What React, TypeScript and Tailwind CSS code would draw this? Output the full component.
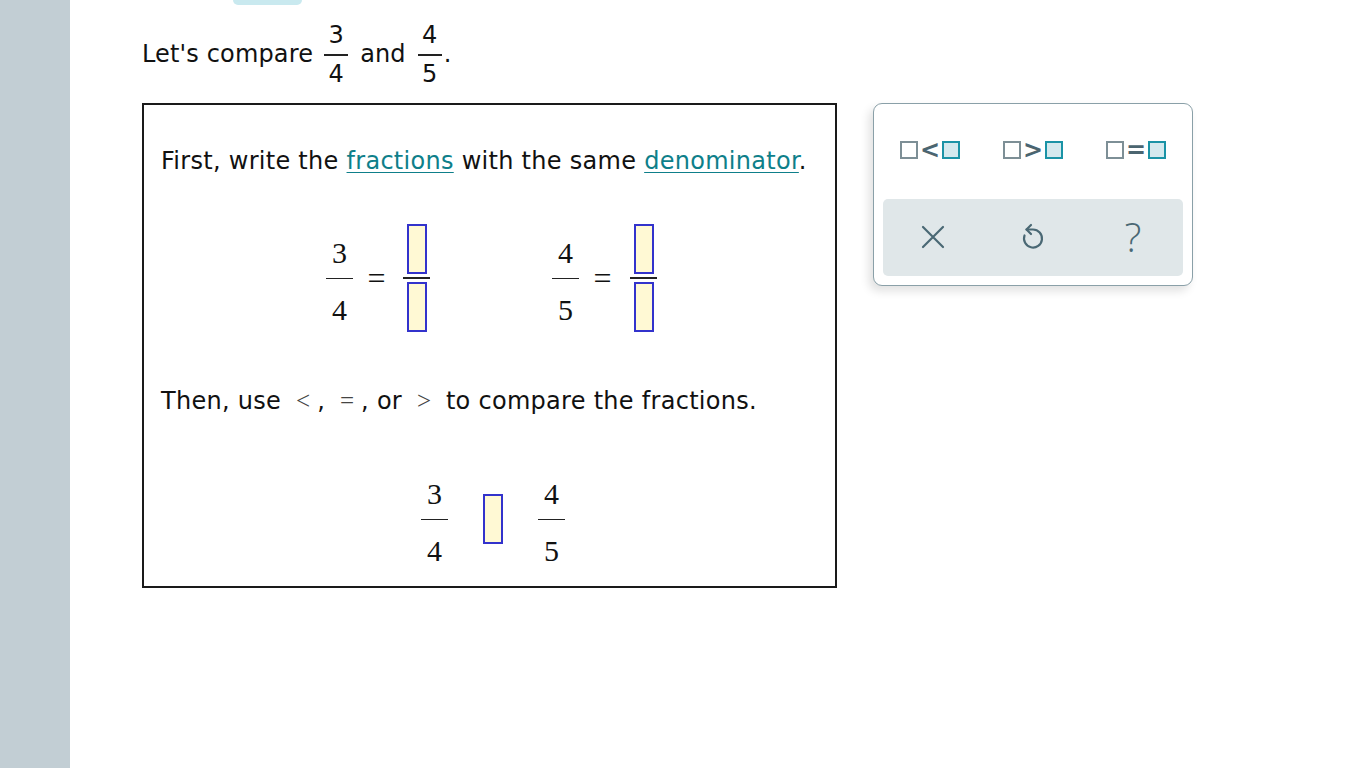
import React from "react";

const sans = { fontFamily: '"DejaVu Sans", Verdana, sans-serif' };
const serif = { fontFamily: '"Liberation Serif", "Times New Roman", serif' };

function Frac({ num, den }: { num: string; den: string }) {
	return (
		<span className="inline-flex w-[24px] flex-col items-center text-[24px]">
			<span className="h-[24px] leading-[24px]">{num}</span>
			<span className="mb-[6px] mt-[7px] h-[1.5px] w-full bg-[#222]" />
			<span className="h-[24px] leading-[24px]">{den}</span>
		</span>
	);
}

function AnswerBox() {
	return <span className="block h-[50px] w-[20px] border-2 border-[#3333cc] bg-[#fff9d4]" />;
}

function BoxFrac() {
	return (
		<span className="flex w-[27px] flex-col items-center">
			<AnswerBox />
			<span className="my-[3px] h-[2px] w-full bg-[#222]" />
			<AnswerBox />
		</span>
	);
}

function SerifFrac({ num, den, className = "" }: { num: string; den: string; className?: string }) {
	return (
		<span className={`flex w-[27px] flex-col items-center text-[30px] text-[#111] ${className}`} style={serif}>
			<span className="h-[30px] leading-[30px]">{num}</span>
			<span className="mb-[16px] mt-[10px] h-[1.5px] w-full bg-[#222]" />
			<span className="h-[30px] leading-[30px]">{den}</span>
		</span>
	);
}

function Eq() {
	return (
		<span className="flex h-[30px] w-[19px] items-center justify-center text-[32px] leading-[30px] text-[#111]" style={serif}>
			=
		</span>
	);
}

function Sym({ children }: { children: React.ReactNode }) {
	return (
		<span className="mx-[7px] text-[25px] tracking-normal text-[#444]" style={serif}>
			{children}
		</span>
	);
}

function Sq({ filled }: { filled?: boolean }) {
	return filled ? (
		<span className="inline-block h-[18px] w-[18px] border-2 border-[#1a93a6] bg-[#d3e9ee]" />
	) : (
		<span className="inline-block h-[18px] w-[18px] border-2 border-[#7d8f96] bg-white" />
	);
}

function RelButton({ sym }: { sym: string }) {
	return (
		<button className="flex h-[40px] w-[90px] items-center justify-center gap-[2px]">
			<Sq />
			<span className="text-[24px] font-semibold leading-none text-[#4b6570]" style={sans}>
				{sym}
			</span>
			<Sq filled />
		</button>
	);
}

function UndoIcon() {
	return (
		<svg width="24" height="28" viewBox="0 0 24 28" fill="none" stroke="#4a6874" strokeWidth="2.2" strokeLinecap="round" strokeLinejoin="round">
			<path d="M10 2 L5.5 6.5 L10 11" />
			<path d="M5.5 6.5 H12 A9 9 0 1 1 3.5 12.5" />
		</svg>
	);
}

export default function App() {
	return (
		<div className="flex min-h-[768px] w-full bg-white text-black" style={sans}>
			<div className="w-[70px] shrink-0 bg-[#c2ced4]" />
			<div className="relative flex-1 pl-[72px]">
				<div className="absolute left-[163px] top-0 h-[5px] w-[69px] rounded-b-[8px] bg-[#c9e9ef]" />

				<div className="flex items-center pt-[23px] text-[24px] tracking-[0.15px] text-[#111]">
					<span className="mr-[11px]">Let's compare</span>
					<Frac num="3" den="4" />
					<span className="mx-[12px]">and</span>
					<Frac num="4" den="5" />
					<span className="ml-[2px]">.</span>
				</div>

				<div className="mt-[17px] flex items-start gap-[36px]">
					<div className="h-[485px] w-[695px] border-2 border-[#1a1a1a] pl-[17px] text-[#111]">
						<p className="mt-[41px] h-[30px] text-[24px] leading-[30px] tracking-[0.28px]">
							First, write the{" "}
							<span className="text-[#0e7f8a] underline decoration-1 underline-offset-[3px]">fractions</span> with the
							same{" "}
							<span className="text-[#0e7f8a] underline decoration-1 underline-offset-[3px]">denominator</span>.
						</p>

						<div className="mt-[48px] flex items-start">
							<SerifFrac num="3" den="4" className="ml-[165px] mt-[14px]" />
							<span className="ml-[14px] mt-[39px]">
								<Eq />
							</span>
							<span className="ml-[17px]">
								<BoxFrac />
							</span>
							<SerifFrac num="4" den="5" className="ml-[122px] mt-[14px]" />
							<span className="ml-[14px] mt-[39px]">
								<Eq />
							</span>
							<span className="ml-[18px]">
								<BoxFrac />
							</span>
						</div>

						<p className="mt-[54px] h-[30px] text-[24px] leading-[30px] tracking-[0.28px]">
							Then, use <Sym>&lt;</Sym>, <Sym>=</Sym>, or <Sym>&gt;</Sym> to compare the fractions.
						</p>

						<div className="mt-[63px] flex items-start">
							<SerifFrac num="3" den="4" className="ml-[260px] w-[26px]" />
							<span className="ml-[35px] mt-[15px]">
								<AnswerBox />
							</span>
							<SerifFrac num="4" den="5" className="ml-[35px] w-[26px]" />
						</div>
					</div>

					<div className="h-[183px] w-[320px] rounded-[9px] border border-[#8aa0a8] bg-white shadow-[-4px_5px_10px_rgba(0,0,0,0.12)]">
						<div className="flex h-[95px] items-center justify-between px-[11px] pb-[2px]">
							<RelButton sym="<" />
							<RelButton sym=">" />
							<RelButton sym="=" />
						</div>
						<div className="mx-[9px] grid h-[77px] grid-cols-3 items-center justify-items-center rounded-[5px] bg-[#e0e7e9]">
							<svg width="24" height="24" viewBox="0 0 24 24" fill="none" stroke="#4a6874" strokeWidth="2.2" strokeLinecap="round">
								<path d="M2 2 L22 22 M22 2 L2 22" />
							</svg>
							<UndoIcon />
							<span className="text-[40px] font-light leading-none text-[#4a6874]" style={{ fontFamily: '"Open Sans", sans-serif' }}>
								?
							</span>
						</div>
					</div>
				</div>
			</div>
		</div>
	);
}
